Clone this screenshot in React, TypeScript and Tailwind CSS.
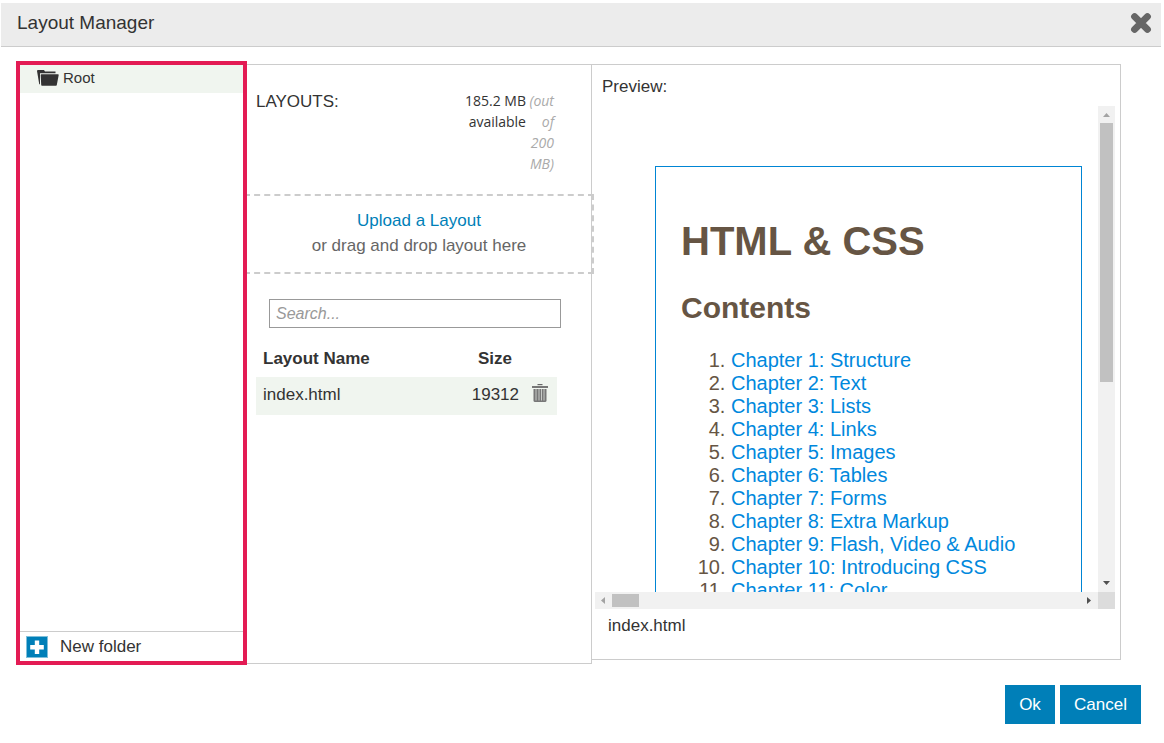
import { useState } from "react";

type LayoutFile = {
  name: string;
  size: number;
};

const files: LayoutFile[] = [{ name: "index.html", size: 19312 }];

const chapters = [
  "Structure",
  "Text",
  "Lists",
  "Links",
  "Images",
  "Tables",
  "Forms",
  "Extra Markup",
  "Flash, Video & Audio",
  "Introducing CSS",
  "Color",
];

function CloseIcon() {
  return (
    <svg width="22" height="22" viewBox="0 0 22 22" aria-hidden="true">
      <path
        d="M4.6 4.6 17.4 17.4M17.4 4.6 4.6 17.4"
        stroke="#666"
        strokeWidth="7"
        strokeLinecap="round"
      />
    </svg>
  );
}

function FolderIcon() {
  return (
    <svg width="22" height="17" viewBox="0 0 22 17" fill="#333" aria-hidden="true">
      <path d="M0 1Q0 0 1 0H7L8 1.5H18.5V3.2H3V14.5L2.2 14 .6 4.5Z" />
      <path d="M4.4 4.3H21Q21.8 4.3 21.7 5L19.8 15Q19.7 15.8 19 15.8H5Q4.2 15.8 4.2 15L3.7 5Q3.7 4.3 4.4 4.3Z" />
    </svg>
  );
}

function PlusIcon() {
  return (
    <svg width="22" height="22" viewBox="0 0 22 22" aria-hidden="true">
      <rect width="22" height="22" fill="#7fbfda" />
      <rect x="1" y="1" width="20" height="20" fill="#007fb8" />
      <path d="M11 4.5V18M4.2 11.3H17.8" stroke="#fff" strokeWidth="4.4" />
    </svg>
  );
}

function TrashIcon() {
  return (
    <svg width="16" height="18" viewBox="0 0 16 18" fill="none" aria-hidden="true">
      <path d="M5.5 .6H10.5" stroke="#666" strokeWidth="1.2" />
      <path d="M0 3H16" stroke="#777" strokeWidth="2" />
      <path d="M1.5 5H14.5V16.5Q14.5 18 13 18H3Q1.5 18 1.5 16.5Z" fill="#777" />
      <path d="M4 5V16.5M7 5V16.5M9.5 5V16.5M12 5V16.5" stroke="#c8cbc7" />
    </svg>
  );
}

function Arrow({ d, fill }: { d: string; fill: string }) {
  return (
    <svg width="17" height="17" viewBox="0 0 17 17" aria-hidden="true">
      <path d={d} fill={fill} />
    </svg>
  );
}

function FolderTree() {
  return (
    <aside className="relative z-10 flex w-[231px] shrink-0 flex-col border-4 border-[#e31b54] bg-white">
      <button
        type="button"
        className="flex h-7 items-center gap-1 bg-[#f0f5ef] pb-[2px] pl-[17px] text-[15px] text-[#333]"
      >
        <FolderIcon />
        Root
      </button>
      <button
        type="button"
        className="mt-auto flex h-[30px] items-center gap-3 border-t border-[#ccc] pl-[6px] text-[17px]"
      >
        <PlusIcon />
        New folder
      </button>
    </aside>
  );
}

function LayoutList() {
  const [query, setQuery] = useState("");
  const visible = files.filter((file) => file.name.includes(query));

  return (
    <section className="relative mt-[3px] mb-px w-[345px] shrink-0 border-t border-r border-b border-[#ccc]">
      <div className="flex h-[129px] items-start justify-between pt-[25px] pr-[37px] pl-[9px]">
        <h2 className="text-[17px] leading-6">LAYOUTS:</h2>
        <div className="flex text-right font-['Open_Sans',sans-serif] text-sm leading-[21px]">
          <span className="w-[68px]">185.2 MB available</span>
          <em className="w-7 text-[#aaa]">(out of 200 MB)</em>
        </div>
      </div>

      <div className="-mx-[3px] flex h-20 flex-col items-center border-2 border-dashed border-[#ccc] pt-3 text-[17px] leading-[25px]">
        <button type="button" className="text-[#007fb8]">
          Upload a Layout
        </button>
        <span className="text-[#666]">or drag and drop layout here</span>
      </div>

      <input
        type="text"
        aria-label="Search layouts"
        placeholder="Search..."
        value={query}
        onChange={(e) => setQuery(e.target.value)}
        className="mt-[25px] ml-[22px] block h-[29px] w-[292px] border border-[#999] px-[6px] text-base placeholder:text-[#999] placeholder:italic"
      />

      <table className="mt-3 ml-[9px] w-[301px] table-fixed text-[17px]">
        <thead>
          <tr className="h-[37px] text-left">
            <th className="pl-[7px]">Layout Name</th>
            <th className="w-[70px] pr-[17px] text-right">Size</th>
            <th className="w-[28px]" aria-label="Actions" />
          </tr>
        </thead>
        <tbody>
          {visible.map((file) => (
            <tr key={file.name} className="h-[38px] bg-[#f0f5ef]">
              <td className="pb-[2px] pl-[7px]">{file.name}</td>
              <td className="pr-[10px] pb-[2px] text-right">{file.size}</td>
              <td className="pb-[6px]">
                <button type="button" aria-label="Delete layout" className="ml-[3px] block">
                  <TrashIcon />
                </button>
              </td>
            </tr>
          ))}
        </tbody>
      </table>
    </section>
  );
}

function Preview() {
  return (
    <section className="mt-[3px] mb-[5px] min-w-0 flex-1 border-t border-r border-b border-[#ccc] pr-[5px] pl-[3px]">
      <h2 className="h-[41px] pt-[10px] pl-[7px] text-[17px] leading-6">Preview:</h2>

      <div className="flex h-[486px]">
        <div className="min-w-0 flex-1 overflow-hidden pt-[60px] pr-4 pl-[60px]">
          <article className="h-[600px] border border-[#0085d4] px-[25px] pt-[51px] text-xl leading-[23px] text-[#665544]">
            <h1 className="text-[40px] leading-[46px] font-bold">HTML &amp; CSS</h1>
            <h2 className="mt-[27px] text-[30px] leading-[34px] font-bold">Contents</h2>
            <ol className="mt-6 list-decimal pl-[50px]">
              {chapters.map((chapter, i) => (
                <li key={chapter}>
                  <a href={`#chapter-${i + 1}`} className="text-[#0088dd]">
                    Chapter {i + 1}: {chapter}
                  </a>
                </li>
              ))}
            </ol>
          </article>
        </div>
        <div className="flex w-[17px] flex-col items-center bg-[#f1f1f1]">
          <Arrow d="M5 11 8.5 7 12 11Z" fill="#a3a3a3" />
          <div className="h-[259px] w-[13px] bg-[#c1c1c1]" />
          <div className="mt-auto">
            <Arrow d="M5 6 8.5 10 12 6Z" fill="#505050" />
          </div>
        </div>
      </div>
      <div className="flex h-[17px] items-center bg-[#f1f1f1]">
        <Arrow d="M10 5 6 8.5 10 12Z" fill="#a3a3a3" />
        <div className="h-[13px] w-[27px] bg-[#c1c1c1]" />
        <div className="ml-auto">
          <Arrow d="M6 5 10 8.5 6 12Z" fill="#505050" />
        </div>
        <div className="size-[17px] bg-[#dcdcdc]" />
      </div>

      <p className="pt-[5px] pl-[13px] text-[17px] leading-6">index.html</p>
    </section>
  );
}

export default function App() {
  return (
    <div className="min-h-screen bg-white pt-[3px] font-['Liberation_Sans',Arial,sans-serif] text-[#333]">
      <header className="mr-[3px] ml-px flex h-11 items-center justify-between border-b border-[#ccc] bg-[#ececec] pr-[9px] pb-[3px] pl-4">
        <h1 className="text-[19px]">Layout Manager</h1>
        <button type="button" aria-label="Close">
          <CloseIcon />
        </button>
      </header>

      <main className="mt-[14px] mr-[43px] ml-4 flex h-[604px]">
        <FolderTree />
        <LayoutList />
        <Preview />
      </main>

      <footer className="mt-5 mr-[23px] flex justify-end gap-[5px] text-[17px] text-white">
        <button type="button" className="h-[39px] w-[50px] bg-[#007fb8]">
          Ok
        </button>
        <button type="button" className="h-[39px] w-[81px] bg-[#007fb8]">
          Cancel
        </button>
      </footer>
    </div>
  );
}
